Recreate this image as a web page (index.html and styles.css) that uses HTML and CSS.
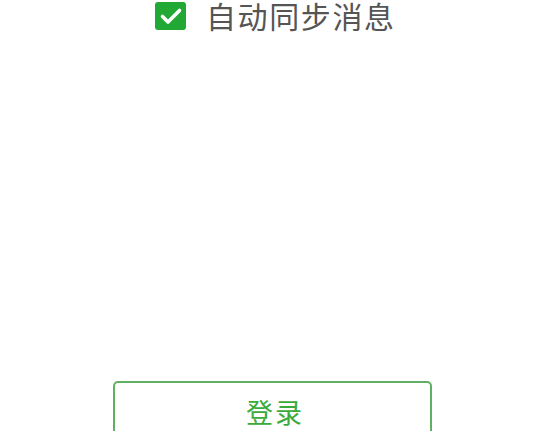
FILE: index.html
```html
<!DOCTYPE html>
<html lang="zh">
<head>
<meta charset="utf-8">
<title>登录</title>
<link rel="stylesheet" href="styles.css">
</head>
<body>
<div class="page">
  <label class="sync-row">
    <span class="checkbox">
      <svg viewBox="0 0 30 28" width="30" height="28" aria-hidden="true">
        <polyline points="6.5,14.5 12,20 23.5,8.5" fill="none" stroke="#ffffff" stroke-width="3.6" stroke-linecap="round" stroke-linejoin="round"/>
      </svg>
    </span>
    <span class="sync-text">自动同步消息</span>
  </label>
  <button class="login-btn" type="button">登录</button>
</div>
</body>
</html>
```
FILE: styles.css
```css
html, body {
  margin: 0;
  padding: 0;
  background: #ffffff;
  overflow: hidden;
}
body {
  width: 558px;
  height: 431px;
  font-family: "Noto Sans CJK SC", "Noto Sans", sans-serif;
}
.page {
  display: flex;
  flex-direction: column;
}
.sync-row {
  display: flex;
  align-items: center;
  height: 31px;
  margin-left: 155px;
  gap: 20px;
}
.checkbox {
  width: 31px;
  height: 28px;
  background: #22a834;
  border-radius: 3px;
  display: flex;
  align-items: center;
  justify-content: center;
}
.checkbox svg {
  display: block;
}
.sync-text {
  font-size: 30px;
  line-height: 31px;
  color: #555555;
  letter-spacing: 1.6px;
}
.login-btn {
  margin-top: 350px;
  margin-left: 113px;
  width: 319px;
  height: 61px;
  border: 2px solid #62ae62;
  border-radius: 5px;
  background: #ffffff;
  color: #3aab3a;
  font-family: "Noto Sans CJK SC", "Noto Sans", sans-serif;
  font-size: 27px;
  letter-spacing: 2px;
  padding: 0 0 0 5px;
}
```
